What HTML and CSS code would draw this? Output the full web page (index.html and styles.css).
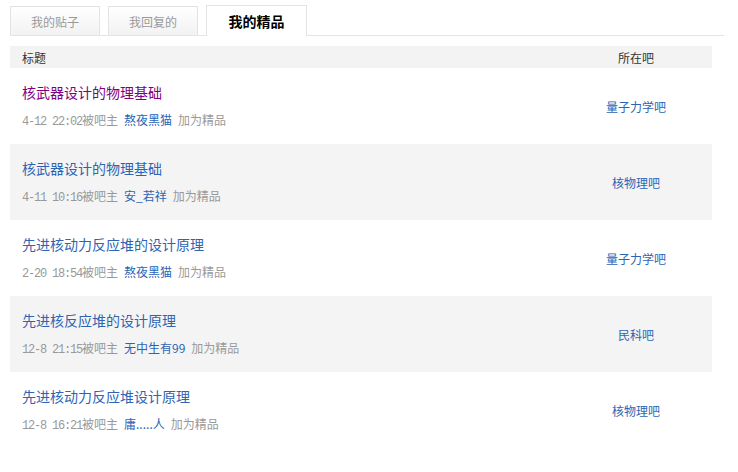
FILE: index.html
```html
<!DOCTYPE html>
<html>
<head>
<meta charset="utf-8">
<link rel="stylesheet" href="styles.css">
</head>
<body>
<div class="tabs">
  <div class="tab">我的贴子</div>
  <div class="tab">我回复的</div>
  <div class="tab active">我的精品</div>
</div>
<div class="list">
  <div class="head">
    <div class="c-title">标题</div>
    <div class="c-bar">所在吧</div>
  </div>
  <div class="row">
    <div class="c-title">
      <a class="title visited">核武器设计的物理基础</a>
      <div class="meta"><span class="time">4-12 22:02</span>被吧主<a class="user">熬夜黑猫</a>加为精品</div>
    </div>
    <div class="c-bar"><a class="bar">量子力学吧</a></div>
  </div>
  <div class="row alt">
    <div class="c-title">
      <a class="title">核武器设计的物理基础</a>
      <div class="meta"><span class="time">4-11 10:16</span>被吧主<a class="user">安_若祥</a>加为精品</div>
    </div>
    <div class="c-bar"><a class="bar">核物理吧</a></div>
  </div>
  <div class="row">
    <div class="c-title">
      <a class="title">先进核动力反应堆的设计原理</a>
      <div class="meta"><span class="time">2-20 18:54</span>被吧主<a class="user">熬夜黑猫</a>加为精品</div>
    </div>
    <div class="c-bar"><a class="bar">量子力学吧</a></div>
  </div>
  <div class="row alt">
    <div class="c-title">
      <a class="title">先进核反应堆的设计原理</a>
      <div class="meta"><span class="time">12-8 21:15</span>被吧主<a class="user">无中生有99</a>加为精品</div>
    </div>
    <div class="c-bar"><a class="bar">民科吧</a></div>
  </div>
  <div class="row">
    <div class="c-title">
      <a class="title">先进核动力反应堆设计原理</a>
      <div class="meta"><span class="time">12-8 16:21</span>被吧主<a class="user">庸.....人</a>加为精品</div>
    </div>
    <div class="c-bar"><a class="bar">核物理吧</a></div>
  </div>
</div>
</body>
</html>
```
FILE: styles.css
```css
body {
  margin: 0;
  background: #fff;
  font-family: "Noto Sans CJK SC", "Liberation Sans", sans-serif;
  font-size: 12px;
  color: #333;
}
.tabs {
  display: flex;
  align-items: flex-end;
  gap: 8px;
  margin-left: 10px;
  width: 714px;
  height: 35px;
  border-bottom: 1px solid #e5e5e5;
}
.tab {
  box-sizing: border-box;
  width: 90px;
  height: 29px;
  border: 1px solid #e3e3e3;
  border-bottom: none;
  background: linear-gradient(#ffffff, #f2f2f2);
  color: #999;
  font-size: 12px;
  display: flex;
  align-items: center;
  justify-content: center;
}
.tab.active {
  width: 101px;
  height: 31px;
  margin-bottom: -1px;
  background: #fff;
  color: #000;
  font-weight: bold;
  font-size: 14px;
  padding-bottom: 1px;
}
.list {
  margin: 10px 0 0 10px;
  width: 702px;
}
.head {
  display: flex;
  align-items: center;
  height: 22px;
  background: #f3f3f3;
  color: #333;
}
.c-title {
  flex: 1;
  padding-left: 12px;
}
.c-bar {
  width: 152px;
  text-align: center;
}
.row {
  display: flex;
  align-items: center;
  height: 76px;
}
.row.alt {
  background: #f4f4f4;
}
.row .c-title {
  align-self: flex-start;
  display: flex;
  flex-direction: column;
  align-items: flex-start;
  padding-top: 14px;
}
.title {
  font-size: 14px;
  color: #2d64b3;
  line-height: 20px;
}
.title.visited {
  color: #800080;
}
.meta {
  margin-top: 10px;
  color: #999;
  line-height: 16px;
}
.time {
  font-family: "Liberation Mono", monospace;
  font-size: 12px;
  letter-spacing: -1.2px;
}
.user {
  color: #2d64b3;
  margin: 0 6px;
}
.bar {
  color: #2d64b3;
}
```
